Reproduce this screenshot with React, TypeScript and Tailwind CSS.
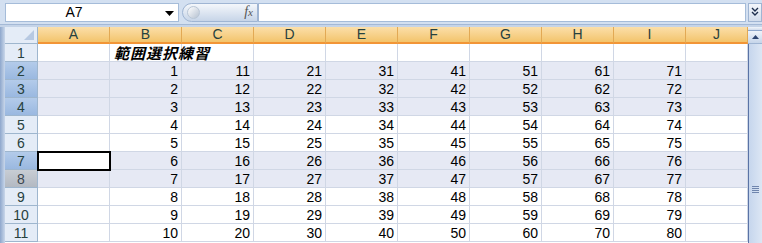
import React from "react";

const COLS = ["A", "B", "C", "D", "E", "F", "G", "H", "I", "J"];
const ROWS = [1, 2, 3, 4, 5, 6, 7, 8, 9, 10, 11];
const SELECTED = [2, 3, 4, 7, 8];

function cellValue(row: number, col: number): string {
  if (row === 1 || col === 0 || col === 9) return "";
  return String((col - 1) * 10 + (row - 1));
}

function RowHeader({ row }: { row: number }) {
  let cls = "bg-[#e4ecf7] text-[#27413e]";
  if (row === 8) cls = "bg-gradient-to-b from-[#c8cdd4] to-[#b3b9c2] text-[#3b4650]";
  else if (SELECTED.includes(row)) cls = "bg-gradient-to-b from-[#b3cbea] to-[#9ab8e0] text-[#27413e]";
  return (
    <div
      className={`h-[18px] leading-[16px] flex items-center justify-center border-b border-[#9eb6ce] border-r border-r-[#9eb6ce] ${cls}`}
    >
      {row}
    </div>
  );
}

export default function App() {
  return (
    <div
      className="w-[762px] h-[243px] overflow-hidden bg-white flex flex-col text-[14px] leading-none"
      style={{ fontFamily: '"Liberation Sans", "Noto Sans CJK JP", sans-serif' }}
    >
      {/* formula bar */}
      <div className="h-[24px] bg-[#d3e0f1] flex items-center pl-[5px] shrink-0">
        <div className="w-[174px] h-[19px] bg-white border border-[#a5bcd9] flex items-center relative">
          <span className="flex-1 text-center pr-[36px] text-[14px] text-black">A7</span>
          <svg className="absolute right-[4px] top-[7px]" width="9" height="5" viewBox="0 0 9 5">
            <path d="M0 0H9L4.5 5Z" fill="#000" />
          </svg>
        </div>
        <div className="ml-[3px] w-[76px] h-[19px] rounded-l-full bg-gradient-to-b from-[#f4f7fb] to-[#c7d5e8] border border-[#9fb5d3] flex items-center relative">
          <div className="ml-[4px] w-[13px] h-[13px] rounded-full bg-gradient-to-br from-[#ffffff] to-[#b6c2d1] border border-[#b9c6d6]" />
          <span
            className="absolute right-[4px] top-[1px] italic text-[#555] text-[14px]"
            style={{ fontFamily: '"Liberation Serif", serif' }}
          >
            f<span className="text-[11px]">x</span>
          </span>
        </div>
        <div className="flex-1 h-[19px] bg-white border border-[#a5bcd9] border-l-[#9fb5d3]" />
        <div className="w-[14px] h-[19px] ml-[2px] bg-gradient-to-b from-[#f3f6fb] to-[#d2ddec] border border-[#9fb5d3] flex items-center justify-center">
          <svg width="8" height="10" viewBox="0 0 8 10">
            <path d="M1 1L4 4L7 1M1 5L4 8L7 5" stroke="#1e2f4d" strokeWidth="1.4" fill="none" />
          </svg>
        </div>
      </div>
      <div className="h-[3px] bg-[#c5d4e8] border-t border-[#a4b9d6] shrink-0" />

      {/* sheet */}
      <div className="flex flex-1 min-h-0">
        <div className="w-[5px] bg-gradient-to-r from-[#8ea7cc] to-[#c9d7ea] shrink-0" />
        <div className="flex-1 grid grid-cols-[33px_repeat(9,72px)_62px] content-start">
          {/* header row */}
          <div className="h-[17px] bg-[#e4ecf7] border-r border-b border-[#9eb6ce] relative">
            <svg className="absolute right-[3px] bottom-[3px]" width="10" height="10" viewBox="0 0 10 10">
              <path d="M10 0V10H0Z" fill="#b7c9e2" />
            </svg>
          </div>
          {COLS.map((c) => (
            <div
              key={c}
              className="h-[17px] leading-[15px] flex items-center justify-center bg-gradient-to-b from-[#fbdfa9] to-[#f3c46b] border-r border-[#e2a954] border-b-2 border-b-[#f29536] text-[#27413e]"
            >
              {c}
            </div>
          ))}
          {ROWS.map((r) => (
            <React.Fragment key={r}>
              <RowHeader row={r} />
              {COLS.map((c, ci) => {
                const sel = SELECTED.includes(r);
                const active = r === 7 && ci === 0;
                const isTitle = r === 1 && ci === 1;
                return (
                  <div
                    key={c}
                    className={`h-[18px] leading-[16px] border-r border-b border-[#d0d7e5] flex items-center pr-[3px] text-black ${
                      isTitle ? "justify-start" : "justify-end"
                    } ${
                      active ? "bg-white outline-2 outline-black -outline-offset-1 relative" : sel ? "bg-[#e6e9f4]" : "bg-white"
                    }`}
                  >
                    {isTitle ? (
                      <span
                        className="relative z-10 whitespace-nowrap font-bold italic text-[15px] tracking-[1px] leading-[16px] pl-[4px]"
                        style={{ fontFamily: '"Noto Sans CJK JP", sans-serif' }}
                      >
                        範囲選択練習
                      </span>
                    ) : (
                      cellValue(r, ci)
                    )}
                  </div>
                );
              })}
            </React.Fragment>
          ))}
        </div>

        {/* vertical scrollbar */}
        <div className="w-[14px] shrink-0 flex flex-col bg-[#e3ebf6]">
          <div className="h-[4px] bg-gradient-to-b from-[#f2f6fb] to-[#cfdbec] border-b border-[#8ea7cc]" />
          <div className="h-[13px] bg-gradient-to-b from-[#eef3fa] to-[#c6d5ea] border-b border-[#9fb5d3] flex items-center justify-center">
            <svg width="7" height="4" viewBox="0 0 7 4">
              <path d="M0 4L3.5 0L7 4Z" fill="#2d4470" />
            </svg>
          </div>
          <div className="flex-1 border-l border-[#5a73a6] bg-gradient-to-r from-[#c6d6ed] to-[#dce6f4] flex items-start justify-center pt-[142px]">
            <div className="flex flex-col gap-[1px]">
              <div className="w-[7px] h-[1px] bg-[#6f85ad]" />
              <div className="w-[7px] h-[1px] bg-[#6f85ad]" />
              <div className="w-[7px] h-[1px] bg-[#6f85ad]" />
              <div className="w-[7px] h-[1px] bg-[#6f85ad]" />
            </div>
          </div>
        </div>
      </div>
    </div>
  );
}
